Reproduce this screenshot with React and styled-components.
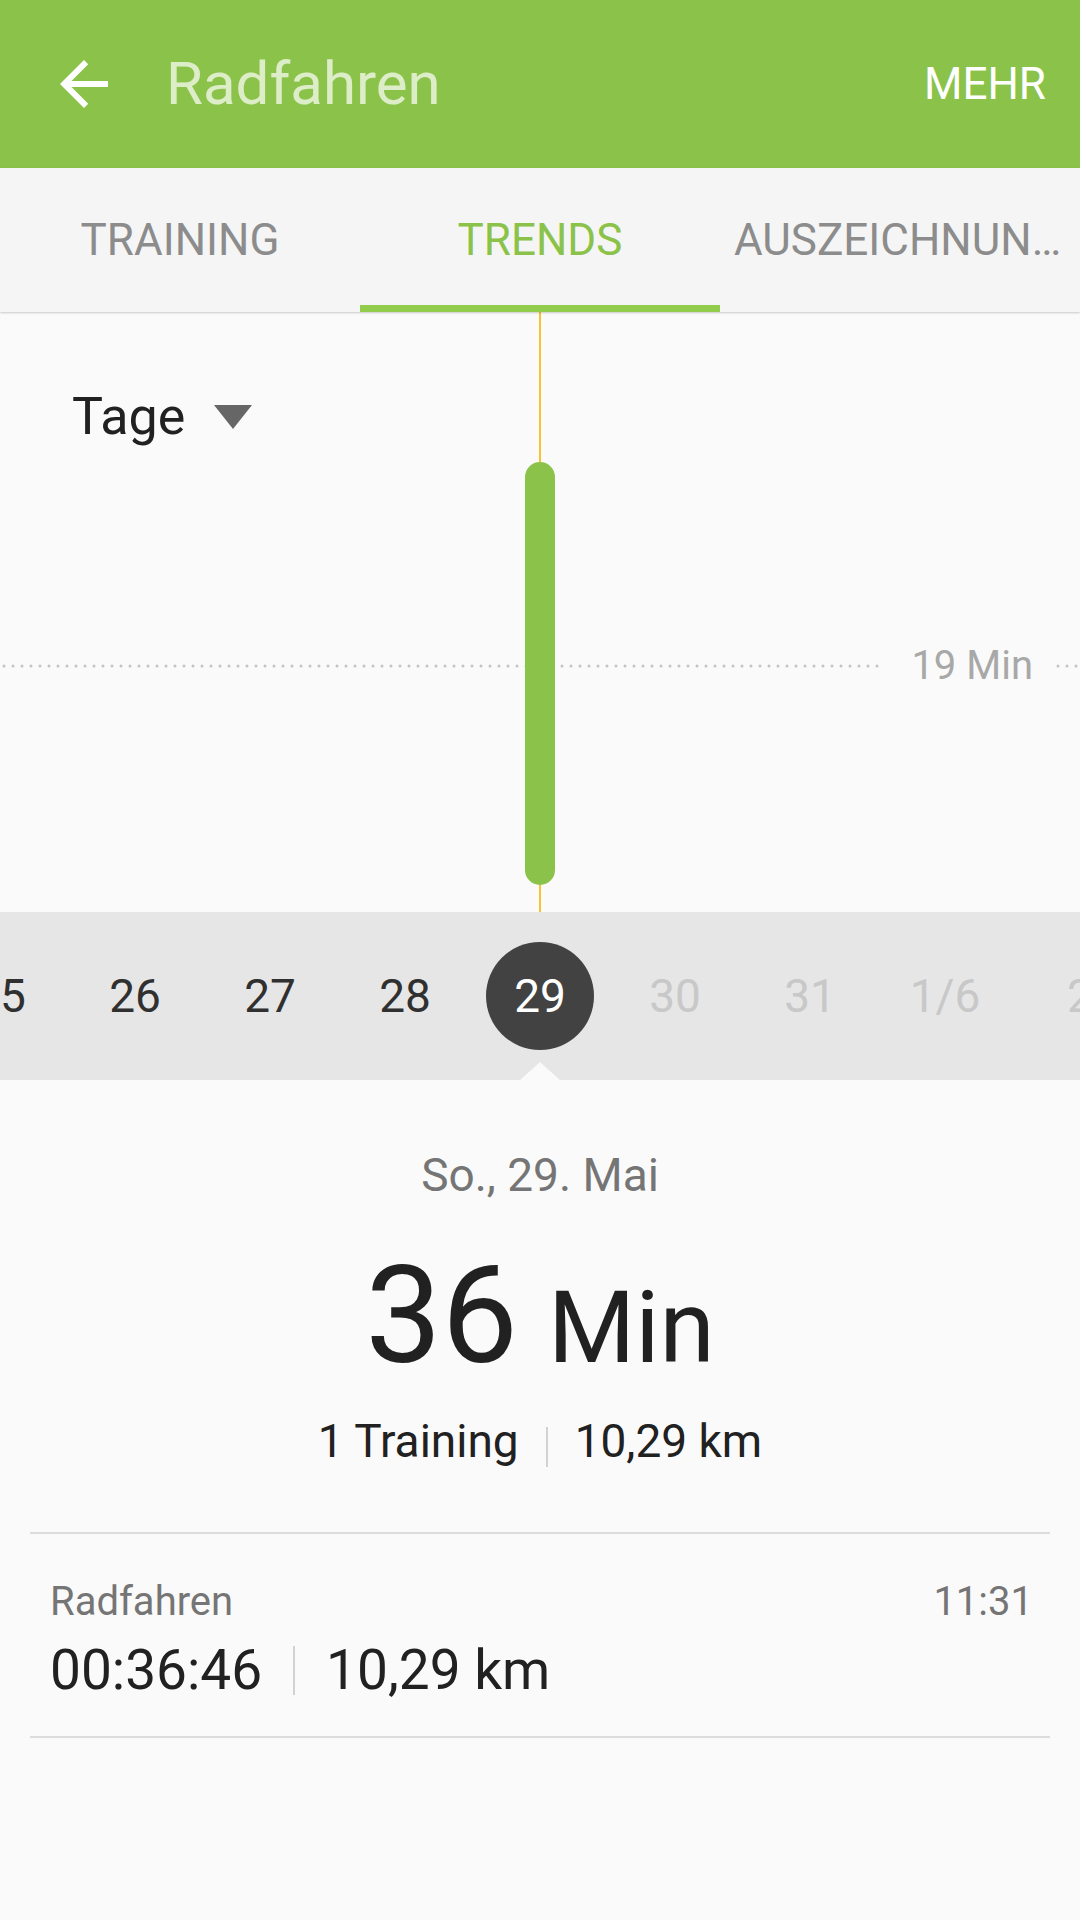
import React from 'react';
import styled, { createGlobalStyle } from 'styled-components';

const GlobalStyle = createGlobalStyle`
  html, body {
    margin: 0;
    padding: 0;
    background: #fafafa;
  }
  body {
    font-family: Roboto, 'Noto Sans', 'Liberation Sans', sans-serif;
  }
  * {
    box-sizing: border-box;
  }
`;

const Screen = styled.div`
  width: 1080px;
  height: 1920px;
  overflow: hidden;
  display: flex;
  flex-direction: column;
  background: #fafafa;
`;

const Header = styled.header`
  height: 168px;
  flex-shrink: 0;
  display: flex;
  align-items: center;
  padding: 0 34px 0 48px;
  background: #8bc34a;
`;

const BackIcon = styled.svg`
  width: 72px;
  height: 72px;
  flex-shrink: 0;
  fill: #ffffff;
`;

const Title = styled.h1`
  flex: 1;
  margin: 0 0 0 46px;
  font-size: 60px;
  font-weight: 400;
  line-height: 60px;
  color: #dcedc8;
`;

const MoreButton = styled.span`
  font-size: 44px;
  line-height: 44px;
  color: #ffffff;
`;

const Tabs = styled.nav`
  position: relative;
  z-index: 1;
  height: 144px;
  flex-shrink: 0;
  display: grid;
  grid-template-columns: repeat(3, 1fr);
  background: #f5f5f5;
  box-shadow: 0 1px 2px rgba(0, 0, 0, 0.2);
`;

const Tab = styled.div`
  min-width: 0;
  display: flex;
  align-items: center;
  justify-content: center;
  padding: 0 14px;
  font-size: 44px;
  color: ${p => (p.$active ? '#8bc34a' : '#8c8c8c')};
  box-shadow: ${p => (p.$active ? 'inset 0 -7px 0 #92cc4c' : 'none')};
`;

const TabLabel = styled.span`
  min-width: 0;
  white-space: nowrap;
  overflow: hidden;
  text-overflow: ellipsis;
`;

const Chart = styled.section`
  position: relative;
  height: 600px;
  flex-shrink: 0;
  padding: 79px 0 0 72px;
`;

const ChartCanvas = styled.svg`
  position: absolute;
  left: 0;
  top: 0;
  width: 1080px;
  height: 600px;
`;

const RangePicker = styled.div`
  position: relative;
  display: inline-flex;
  align-items: center;
  gap: 29px;
  font-size: 52px;
  line-height: 52px;
  color: #212121;
`;

const Caret = styled.span`
  width: 0;
  height: 0;
  border-left: 19px solid transparent;
  border-right: 19px solid transparent;
  border-top: 24px solid #666666;
`;

const AxisLabel = styled.span`
  position: absolute;
  right: 47px;
  top: 334px;
  font-size: 40px;
  line-height: 40px;
  color: #a8a8a8;
`;

const DateStrip = styled.div`
  position: relative;
  height: 168px;
  flex-shrink: 0;
  display: flex;
  align-items: center;
  overflow: hidden;
  background: #e6e6e6;
`;

const DateRow = styled.div`
  display: flex;
  margin-left: -67.5px;
`;

const DateItem = styled.div`
  width: 135px;
  height: 108px;
  flex-shrink: 0;
  display: flex;
  align-items: center;
  justify-content: center;
`;

const DateBubble = styled.span`
  width: 108px;
  height: 108px;
  display: flex;
  align-items: center;
  justify-content: center;
  border-radius: 50%;
  font-size: 46px;
  line-height: 46px;
  background: ${p => (p.$state === 'selected' ? '#424242' : 'transparent')};
  color: ${p =>
    p.$state === 'selected' ? '#ffffff' : p.$state === 'future' ? '#c8c8c8' : '#303030'};
`;

const Pointer = styled.span`
  position: absolute;
  left: 520px;
  bottom: 0;
  width: 0;
  height: 0;
  border-left: 20px solid transparent;
  border-right: 20px solid transparent;
  border-bottom: 18px solid #fafafa;
`;

const Summary = styled.section`
  display: flex;
  flex-direction: column;
  align-items: center;
  padding-top: 72px;
`;

const DayLabel = styled.div`
  font-size: 46px;
  line-height: 46px;
  color: #757575;
`;

const Total = styled.div`
  margin-top: 50px;
  font-size: 136px;
  line-height: 136px;
  color: #212121;
`;

const TotalUnit = styled.span`
  margin-left: 30px;
  font-size: 100px;
`;

const Stats = styled.div`
  margin-top: 22px;
  display: flex;
  align-items: flex-start;
  font-size: 46px;
  line-height: 46px;
  color: #212121;
`;

const Separator = styled.span`
  width: 2px;
  flex-shrink: 0;
  height: ${p => p.$height}px;
  margin: ${p => p.$top}px ${p => p.$gap}px 0;
  background: #d2d2d2;
`;

const Divider = styled.hr`
  margin: ${p => p.$top || 0}px 30px 0;
  height: 2px;
  border: 0;
  background: #dcdcdc;
`;

const Workout = styled.div`
  padding: 48px 47px 38px 50px;
`;

const WorkoutHead = styled.div`
  display: flex;
  justify-content: space-between;
  font-size: 40px;
  line-height: 40px;
  color: #757575;
`;

const WorkoutValues = styled.div`
  margin-top: 21px;
  display: flex;
  align-items: center;
  font-size: 55px;
  line-height: 55px;
  color: #212121;
`;

const dates = [
  { label: '25', state: 'past' },
  { label: '26', state: 'past' },
  { label: '27', state: 'past' },
  { label: '28', state: 'past' },
  { label: '29', state: 'selected' },
  { label: '30', state: 'future' },
  { label: '31', state: 'future' },
  { label: '1/6', state: 'future' },
  { label: '2', state: 'future' },
];

export default function App() {
  return (
    <Screen>
      <GlobalStyle />
      <Header>
        <BackIcon viewBox="0 0 24 24">
          <path d="M20 11H7.83l5.59-5.59L12 4l-8 8 8 8 1.41-1.41L7.83 13H20v-2z" />
        </BackIcon>
        <Title>Radfahren</Title>
        <MoreButton>MEHR</MoreButton>
      </Header>

      <Tabs>
        <Tab><TabLabel>TRAINING</TabLabel></Tab>
        <Tab $active><TabLabel>TRENDS</TabLabel></Tab>
        <Tab><TabLabel>AUSZEICHNUNGEN</TabLabel></Tab>
      </Tabs>

      <Chart>
        <ChartCanvas viewBox="0 0 1080 600">
          <line x1="4" y1="354" x2="885" y2="354" stroke="#c4c4c4" strokeWidth="3"
            strokeLinecap="round" strokeDasharray="0 9" />
          <line x1="1058" y1="354" x2="1080" y2="354" stroke="#c4c4c4" strokeWidth="3"
            strokeLinecap="round" strokeDasharray="0 9" />
          <line x1="540" y1="0" x2="540" y2="600" stroke="#f9c32b" strokeWidth="2" />
          <rect x="525" y="150" width="30" height="423" rx="15" fill="#8bc34a" />
        </ChartCanvas>
        <RangePicker>
          Tage
          <Caret />
        </RangePicker>
        <AxisLabel>19 Min</AxisLabel>
      </Chart>

      <DateStrip>
        <DateRow>
          {dates.map(d => (
            <DateItem key={d.label}>
              <DateBubble $state={d.state}>{d.label}</DateBubble>
            </DateItem>
          ))}
        </DateRow>
        <Pointer />
      </DateStrip>

      <Summary>
        <DayLabel>So., 29. Mai</DayLabel>
        <Total>
          36<TotalUnit>Min</TotalUnit>
        </Total>
        <Stats>
          <span>1 Training</span>
          <Separator $height={40} $top={9} $gap={27} />
          <span>10,29 km</span>
        </Stats>
      </Summary>

      <Divider $top={65} />
      <Workout>
        <WorkoutHead>
          <span>Radfahren</span>
          <span>11:31</span>
        </WorkoutHead>
        <WorkoutValues>
          <span>00:36:46</span>
          <Separator $height={49} $top={0} $gap={31} />
          <span>10,29 km</span>
        </WorkoutValues>
      </Workout>
      <Divider />
    </Screen>
  );
}
